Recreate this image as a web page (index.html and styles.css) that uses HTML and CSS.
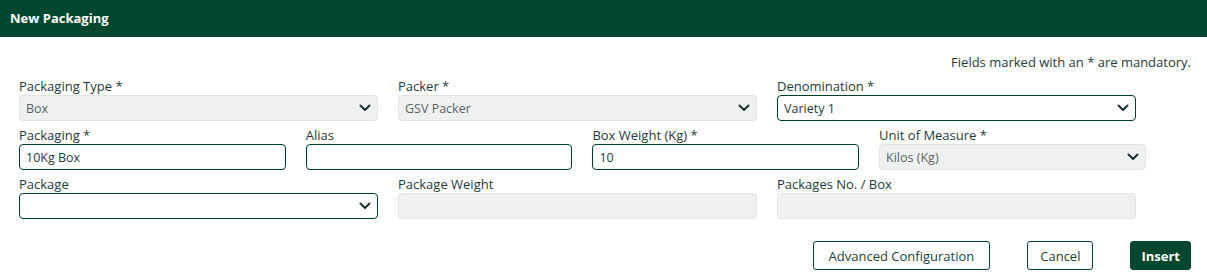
FILE: index.html
```html
<!DOCTYPE html>
<html lang="en">
<head>
    <meta charset="UTF-8">
    <meta name="viewport" content="width=device-width, initial-scale=1.0">
    <title>New Packaging</title>
    <link rel="stylesheet" href="styles.css">
</head>
<body>
    <div class="modal">
        <div class="modal-header">New Packaging</div>
        <div class="modal-body">
            <p class="note">Fields marked with an * are mandatory.</p>

            <div class="row three">
                <div class="field">
                    <label>Packaging Type *</label>
                    <div class="control disabled select"><span>Box</span><svg class="chev" viewBox="0 0 12 8"><path d="M1.5 1.5 6 6 10.5 1.5"/></svg></div>
                </div>
                <div class="field">
                    <label>Packer *</label>
                    <div class="control disabled select"><span>GSV Packer</span><svg class="chev" viewBox="0 0 12 8"><path d="M1.5 1.5 6 6 10.5 1.5"/></svg></div>
                </div>
                <div class="field">
                    <label>Denomination *</label>
                    <div class="control select"><span>Variety 1</span><svg class="chev" viewBox="0 0 12 8"><path d="M1.5 1.5 6 6 10.5 1.5"/></svg></div>
                </div>
            </div>

            <div class="row four">
                <div class="field">
                    <label>Packaging *</label>
                    <div class="control"><span>10Kg Box</span></div>
                </div>
                <div class="field">
                    <label>Alias</label>
                    <div class="control"><span></span></div>
                </div>
                <div class="field">
                    <label>Box Weight (Kg) *</label>
                    <div class="control"><span>10</span></div>
                </div>
                <div class="field">
                    <label>Unit of Measure *</label>
                    <div class="control disabled select"><span>Kilos (Kg)</span><svg class="chev" viewBox="0 0 12 8"><path d="M1.5 1.5 6 6 10.5 1.5"/></svg></div>
                </div>
            </div>

            <div class="row three">
                <div class="field">
                    <label>Package</label>
                    <div class="control select"><span></span><svg class="chev" viewBox="0 0 12 8"><path d="M1.5 1.5 6 6 10.5 1.5"/></svg></div>
                </div>
                <div class="field">
                    <label>Package Weight</label>
                    <div class="control disabled"><span></span></div>
                </div>
                <div class="field">
                    <label>Packages No. / Box</label>
                    <div class="control disabled"><span></span></div>
                </div>
            </div>

            <div class="actions">
                <button class="btn outline wide">Advanced Configuration</button>
                <button class="btn outline">Cancel</button>
                <button class="btn primary">Insert</button>
            </div>
        </div>
    </div>
</body>
</html>
```

FILE: styles.css
```css
body {
    margin: 0;
    font-family: "Open Sans", Arial, sans-serif;
    background-color: #fff;
    color: #1e3b3b;
}
.modal {
    width: 1207px;
}
.modal-header {
    height: 37px;
    box-sizing: border-box;
    padding: 9px 10px 0;
    background-color: #00472f;
    color: #fff;
    font-size: 13px;
    font-weight: 700;
    line-height: 18px;
}
.modal-body {
    padding: 16px 16px 0 19px;
}
.note {
    margin: 0 0 8px;
    text-align: right;
    font-size: 13px;
    line-height: 18px;
    color: #1e3b3b;
}
.row {
    display: grid;
    column-gap: 20px;
    margin-bottom: 7px;
}
.three {
    grid-template-columns: repeat(3, 359px);
}
.four {
    grid-template-columns: repeat(4, 266.7px);
}
.field label {
    display: block;
    height: 16px;
    font-size: 13px;
    line-height: 15px;
    color: #1e3b3b;
}
.control {
    height: 26px;
    box-sizing: border-box;
    border: 1px solid #003d2a;
    border-radius: 4px;
    display: flex;
    align-items: center;
    justify-content: space-between;
    padding: 0 6px 0 6px;
    font-size: 12.5px;
    color: #2c3a3a;
}
.control.disabled {
    background-color: #eef1f0;
    border-color: #e0e4e3;
    color: #5a6464;
}
.chev {
    width: 12px;
    height: 8px;
    fill: none;
    stroke: #1c3232;
    stroke-width: 2;
    stroke-linecap: round;
    stroke-linejoin: round;
}
.actions {
    display: flex;
    justify-content: flex-end;
    gap: 37px;
    margin-top: 22px;
}
.btn {
    height: 29px;
    box-sizing: border-box;
    padding: 0 12px;
    font-family: "Open Sans", Arial, sans-serif;
    font-size: 13px;
    border-radius: 3px;
    cursor: pointer;
}
.outline {
    background-color: #fff;
    border: 1px solid #00472f;
    color: #1d3f3a;
}
.wide {
    padding: 0 15px;
}
.primary {
    background-color: #00472f;
    border: 1px solid #00472f;
    color: #fff;
    font-weight: 700;
    padding: 0 10px;
}
```
